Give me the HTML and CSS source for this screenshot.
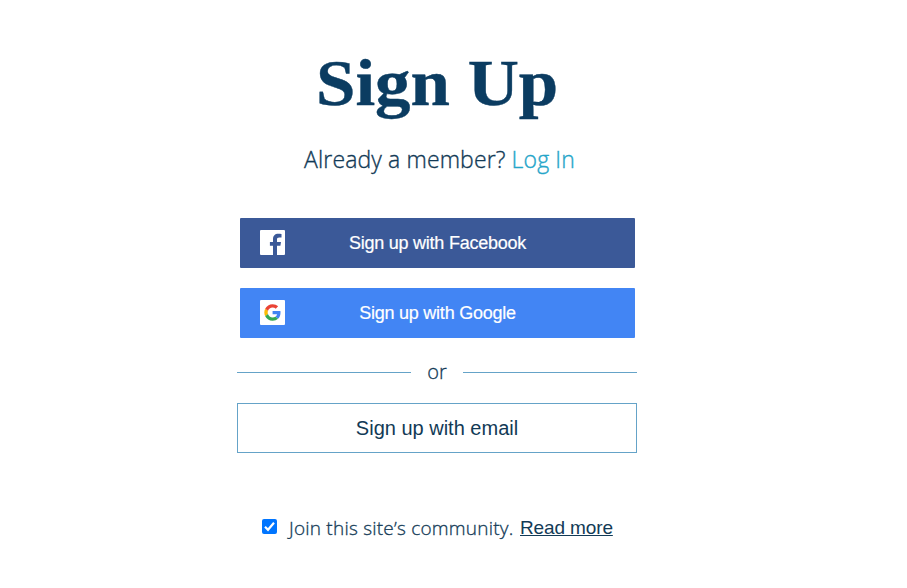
FILE: index.html
```html
<!DOCTYPE html>
<html lang="en">
<head>
<meta charset="utf-8">
<title>Sign Up</title>
<link rel="stylesheet" href="styles.css">
</head>
<body>
<main class="signup">
  <h1 class="title"><span class="fit-title">Sign Up</span></h1>
  <p class="member">Already a member? <a class="login" href="#">Log In</a></p>
  <div class="social">
    <button class="btn facebook">
      <svg class="logo" viewBox="0 0 25 25"><rect width="25" height="25" rx="1" fill="#fff"/><path d="M13 25v-9.200H9.900V12H13V9.300C13 5.500 15 3.700 18.300 3.700c1.400 0 2.600.1 3.200.2v3.500h-2.200c-1.900 0-2.300.8-2.300 2.200V12h4l-.6 3.800H17V25z" fill="#3b5998"/></svg>
      <span>Sign up with Facebook</span>
    </button>
    <button class="btn google">
      <svg class="logo" viewBox="0 0 25 25"><rect width="25" height="25" rx="1" fill="#fff"/><g transform="translate(4.300 4.200) scale(.345)"><path fill="#EA4335" d="M24 9.500c3.540 0 6.710 1.220 9.210 3.600l6.850-6.850C35.900 2.380 30.470 0 24 0 14.620 0 6.510 5.380 2.560 13.220l7.980 6.190C12.430 13.720 17.740 9.500 24 9.500z"/><path fill="#4285F4" d="M46.980 24.550c0-1.570-.15-3.090-.38-4.550H24v9.020h12.940c-.58 2.960-2.260 5.480-4.780 7.180l7.730 6c4.510-4.180 7.090-10.360 7.090-17.650z"/><path fill="#FBBC05" d="M10.530 28.590c-.48-1.450-.76-2.990-.76-4.590s.27-3.140.76-4.590l-7.980-6.190C.92 16.460 0 20.120 0 24s.92 7.540 2.560 10.780l7.970-6.190z"/><path fill="#34A853" d="M24 48c6.480 0 11.930-2.130 15.890-5.810l-7.730-6c-2.150 1.450-4.920 2.300-8.160 2.300-6.260 0-11.570-4.220-13.470-9.910l-7.980 6.190C6.510 42.620 14.620 48 24 48z"/></g></svg>
      <span>Sign up with Google</span>
    </button>
  </div>
  <div class="divider"><span>or</span></div>
  <button class="email">Sign up with email</button>
  <div class="community">
    <svg class="check" viewBox="0 0 15 15"><rect width="15" height="15" rx="2" fill="#0075ff"/><path d="M3 7.800l3 3 6-7" fill="none" stroke="#fff" stroke-width="2.200"/></svg>
    <span class="join">Join this site’s community.</span>
    <a class="more" href="#">Read more</a>
  </div>
</main>
</body>
</html>
```
FILE: styles.css
```css
* { box-sizing: border-box; }
body { margin: 0; background: #fff; color: #123a56; font-family: "Open Sans", sans-serif; }
.signup { width: 400px; margin-left: 237px; padding-top: 46px; }
.title { margin: 0; height: 80px; text-align: center; font: bold 65px/75px "Liberation Serif", serif; color: #0b3c61; white-space: nowrap; -webkit-text-stroke: .4px #0b3c61; }
.fit-title { display: inline-block; transform: scaleX(1.09); }
.member { margin: 16px 0 0; padding-left: 5px; text-align: center; font-size: 23px; font-weight: 300; line-height: 34px; letter-spacing: .12px; white-space: nowrap; -webkit-text-stroke: .35px currentColor; }
.login { color: #25a5c9; text-decoration: none; }
.social { display: grid; gap: 20px; margin: 42px 2px 0 3px; }
.btn { display: grid; grid-template-columns: 65px 1fr 65px; align-items: center; height: 50px; padding: 0; border: 0; border-radius: 1px; color: #fff; font: 18px "Liberation Sans", sans-serif; letter-spacing: -.24px; -webkit-text-stroke: .2px #fff; }
.facebook { background: #3b5998; }
.google { background: #4285f4; }
.logo { display: block; width: 25px; height: 25px; margin: -1px 0 0 20px; }
.divider { display: flex; align-items: center; gap: 16px; height: 28px; margin-top: 20px; font-size: 20px; font-weight: 300; line-height: 28px; -webkit-text-stroke: .3px currentColor; }
.divider::before, .divider::after { content: ""; flex: 1; height: 1px; background: #65a3c8; }
.email { display: block; width: 400px; height: 50px; margin-top: 17px; border: 1px solid #65a3c8; background: #fff; color: #123a56; font: 20px "Liberation Sans", sans-serif; }
.community { display: flex; align-items: center; height: 28px; margin: 61px 0 0 25px; white-space: nowrap; }
.check { width: 15px; height: 15px; margin-top: -4px; }
.join { width: 225px; margin-left: 12px; font-size: 19px; font-weight: 300; letter-spacing: .22px; -webkit-text-stroke: .3px currentColor; }
.more { margin-left: 6px; color: #123a56; font: 19px "Liberation Sans", sans-serif; letter-spacing: -.13px; }
```
